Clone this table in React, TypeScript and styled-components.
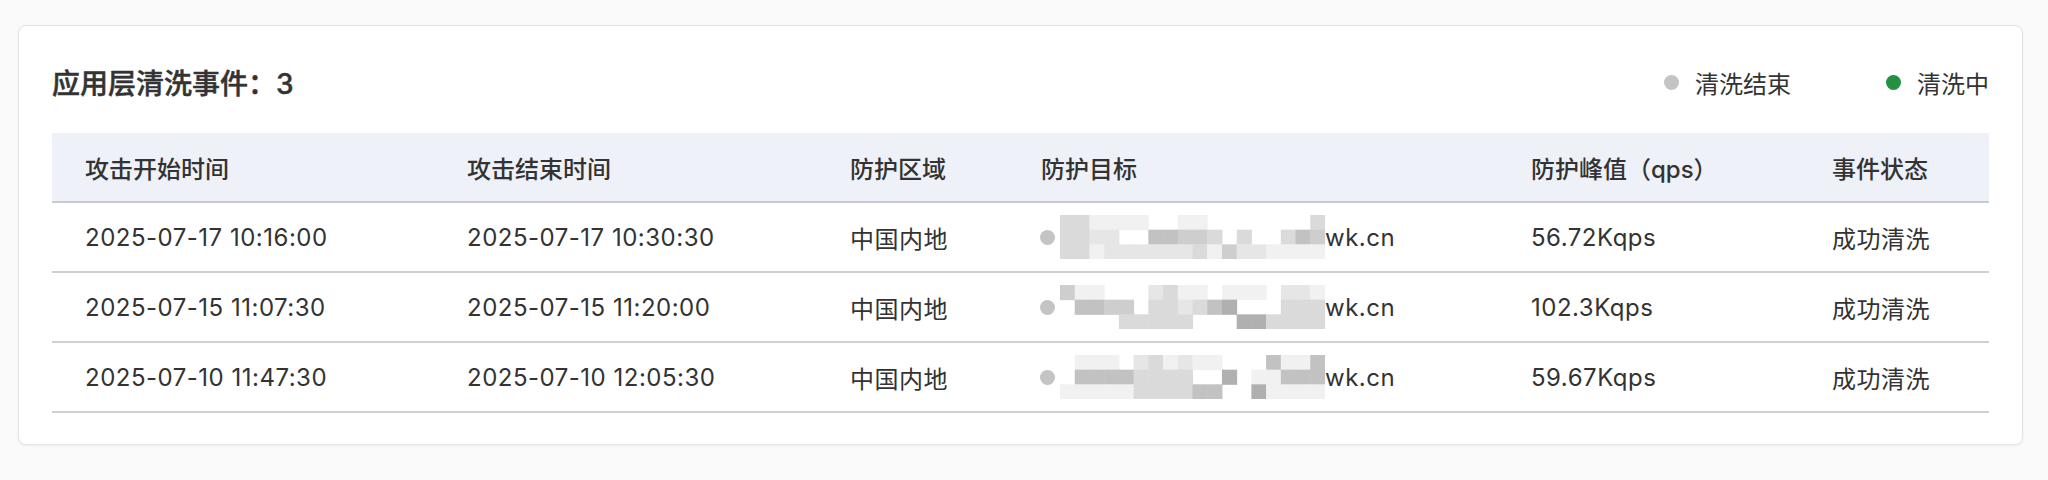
import React from 'react';
import styled, { createGlobalStyle } from 'styled-components';

const GlobalStyle = createGlobalStyle`
  body {
    margin: 0;
    background: #fafafa;
    font-family: Inter, "Noto Sans CJK SC", sans-serif;
    color: #333;
  }
`;

// Styles
const Page = styled.div`
  padding: 25px 25px 35px 18px;
`;

const Card = styled.section`
  background: #fff;
  border: 1px solid #e3e3e3;
  border-radius: 8px;
  box-shadow: 0 1px 3px rgba(0, 0, 0, 0.05);
  padding: 0 33px 31px 33px;
`;

const TitleRow = styled.div`
  display: flex;
  justify-content: space-between;
  align-items: center;
  height: 40px;
  margin: 36px 0 31px 0;
`;

const Title = styled.h2`
  margin: 0;
  font-size: 28px;
  font-weight: 500;
  color: #333;
  -webkit-text-stroke: 0.45px #333;
`;

const Legend = styled.div`
  display: flex;
  align-items: center;
  gap: 95px;
`;

const LegendItem = styled.div`
  display: flex;
  align-items: center;
  gap: 16px;
  font-size: 24px;
  color: #333;
`;

const Dot = styled.span<{ $color: string }>`
  display: inline-block;
  width: 15px;
  height: 15px;
  border-radius: 50%;
  background: ${(p) => p.$color};
  flex: none;
`;

const COLUMNS = '382px 383px 191px 490px 301px 191px';

const HeaderRow = styled.div`
  display: grid;
  grid-template-columns: ${COLUMNS};
  height: 68px;
  background: #eef1f7;
  border-bottom: 2px solid #c8cad0;
`;

const Row = styled.div`
  display: grid;
  grid-template-columns: ${COLUMNS};
  height: 68px;
  border-bottom: 2px solid #d0d0d3;
`;

const Cell = styled.div<{ $head?: boolean }>`
  display: flex;
  align-items: center;
  padding-left: 33px;
  font-size: 24px;
  font-weight: ${(p) => (p.$head ? 500 : 400)};
  letter-spacing: ${(p) => (p.$head ? 0 : 0.5)}px;
  color: #333;
  white-space: nowrap;
`;

const Target = styled.span`
  display: flex;
  align-items: center;
  gap: 5px;
  margin-left: -1px;
`;

const Domain = styled.span`
  display: flex;
  align-items: center;
`;

/* Mosaic (pixelated domain) */

const GRAYS = ['transparent', '#f1f1f1', '#e6e6e6', '#dadada', '#cecece', '#c2c2c2', '#b0b0b0'];

const Mosaic: React.FC<{ rows: number[][] }> = ({ rows }) => {
  const cw = 265 / 18;
  const ch = 44 / 3;
  return (
    <svg width="265" height="44" viewBox="0 0 265 44">
      {rows.map((r, y) =>
        r.map((v, x) =>
          v ? (
            <rect
              key={`${y}-${x}`}
              x={x * cw}
              y={y * ch}
              width={cw + 0.5}
              height={ch + 0.5}
              fill={GRAYS[v]}
            />
          ) : null
        )
      )}
    </svg>
  );
};

const headers = ['攻击开始时间', '攻击结束时间', '防护区域', '防护目标', '防护峰值（qps）', '事件状态'];

const events = [
  {
    start: '2025-07-17 10:16:00',
    end: '2025-07-17 10:30:30',
    region: '中国内地',
    mosaic: [
      [3, 3, 1, 1, 1, 1, 0, 0, 1, 1, 0, 0, 0, 0, 0, 0, 0, 3],
      [3, 3, 2, 2, 0, 0, 5, 5, 4, 4, 3, 0, 3, 0, 0, 3, 5, 4],
      [3, 3, 1, 2, 2, 2, 2, 2, 2, 3, 1, 4, 2, 2, 1, 1, 1, 1],
    ],
    peak: '56.72Kqps',
    status: '成功清洗',
  },
  {
    start: '2025-07-15 11:07:30',
    end: '2025-07-15 11:20:00',
    region: '中国内地',
    mosaic: [
      [4, 1, 1, 0, 0, 0, 2, 3, 1, 1, 0, 1, 1, 1, 0, 2, 2, 1],
      [0, 5, 5, 4, 4, 0, 3, 3, 2, 3, 5, 6, 0, 0, 0, 3, 3, 3],
      [0, 0, 0, 0, 3, 3, 3, 3, 3, 0, 0, 0, 6, 6, 3, 3, 3, 3],
    ],
    peak: '102.3Kqps',
    status: '成功清洗',
  },
  {
    start: '2025-07-10 11:47:30',
    end: '2025-07-10 12:05:30',
    region: '中国内地',
    mosaic: [
      [0, 1, 1, 1, 0, 2, 3, 1, 2, 1, 1, 0, 0, 0, 5, 1, 1, 5],
      [0, 5, 5, 5, 5, 3, 3, 3, 3, 0, 0, 6, 0, 1, 1, 5, 5, 5],
      [1, 1, 1, 1, 1, 3, 3, 3, 3, 5, 5, 0, 0, 6, 1, 1, 1, 1],
    ],
    peak: '59.67Kqps',
    status: '成功清洗',
  },
];

/* Main Component */

const App: React.FC = () => {
  return (
    <Page>
      <GlobalStyle />
      <Card>
        <TitleRow>
          <Title>应用层清洗事件：3</Title>
          <Legend>
            <LegendItem>
              <Dot $color="#c4c4c4" />
              清洗结束
            </LegendItem>
            <LegendItem>
              <Dot $color="#23913f" />
              清洗中
            </LegendItem>
          </Legend>
        </TitleRow>
        <HeaderRow>
          {headers.map((h) => (
            <Cell $head key={h}>
              {h}
            </Cell>
          ))}
        </HeaderRow>
        {events.map((e) => (
          <Row key={e.start}>
            <Cell>{e.start}</Cell>
            <Cell>{e.end}</Cell>
            <Cell>{e.region}</Cell>
            <Cell>
              <Target>
                <Dot $color="#c4c4c4" />
                <Domain>
                  <Mosaic rows={e.mosaic} />
                  wk.cn
                </Domain>
              </Target>
            </Cell>
            <Cell>{e.peak}</Cell>
            <Cell>{e.status}</Cell>
          </Row>
        ))}
      </Card>
    </Page>
  );
};

export default App;
